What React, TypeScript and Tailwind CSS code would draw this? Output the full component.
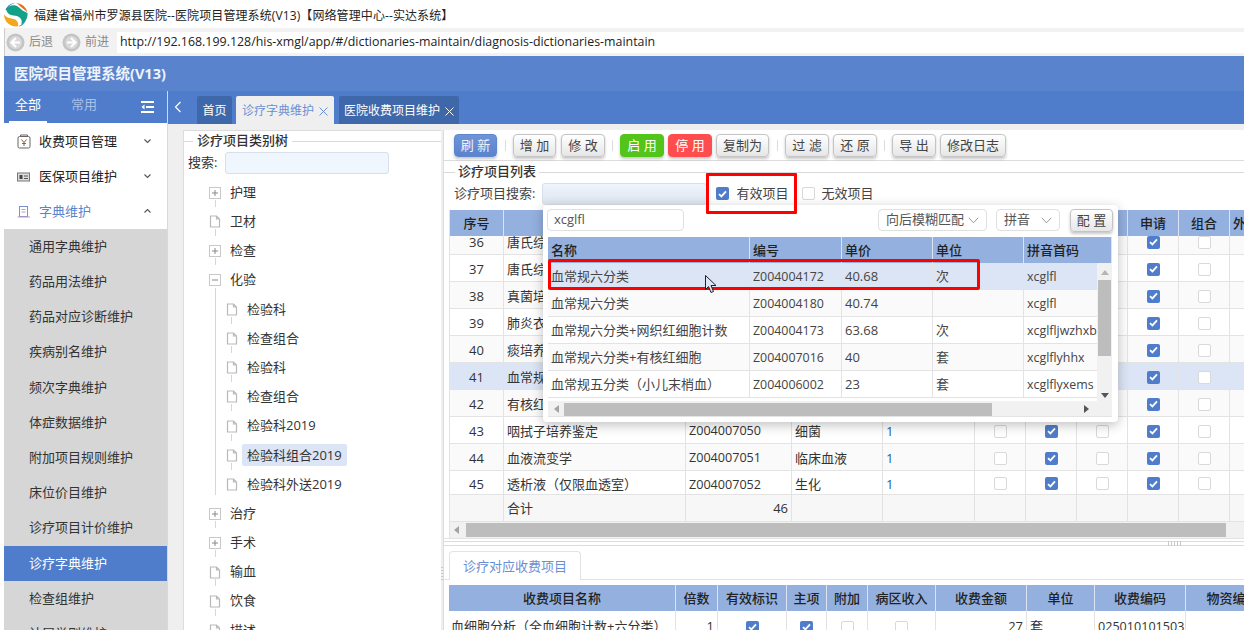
import React from "react";

const Check = ({ on = false }: { on?: boolean }) =>
  on ? (
    <span className="inline-flex w-[13px] h-[13px] rounded-[2px] bg-[#4f7dcb] items-center justify-center shrink-0">
      <svg width="9" height="8" viewBox="0 0 9 8" fill="none">
        <path d="M1 4.2 L3.4 6.4 L8 1.4" stroke="#fff" strokeWidth="1.8" />
      </svg>
    </span>
  ) : (
    <span className="inline-block w-[13px] h-[13px] rounded-[2px] bg-white border border-[#d9d9d9] shrink-0" />
  );

const Btn = ({ label, w, kind }: { label: string; w: string; kind?: "blue" | "green" | "red" }) => {
  const style =
    kind === "blue"
      ? "bg-gradient-to-b from-[#6f95d8] to-[#5a83cd] text-[#eef3fb] border-[#5f87cf]"
      : kind === "green"
      ? "bg-[#52c41a] text-white border-[#52c41a]"
      : kind === "red"
      ? "bg-[#ff4d4f] text-white border-[#ff4d4f]"
      : "bg-gradient-to-b from-white to-[#e6e6e6] text-[#444] border-[#c4c4c4]";
  return (
    <div
      className={`${w} h-[23px] pt-[2px] rounded-[4px] border flex items-center justify-center text-[13px] shadow-[0_2px_3px_rgba(0,0,0,0.22)] whitespace-pre ${style}`}
    >
      {label}
    </div>
  );
};

const Sep = ({ wide = false }: { wide?: boolean }) => (
  <div className={`w-px h-[11px] bg-[#dcdcdc] mr-[7px] ${wide ? "ml-[8px]" : "ml-[7px]"}`} />
);

const PlusBox = ({ minus = false }: { minus?: boolean }) => (
  <svg width="12" height="12" viewBox="0 0 12 12" fill="none" className="shrink-0">
    <rect x="0.5" y="0.5" width="11" height="11" fill="#fff" stroke="#c8c8c8" />
    <path d="M3 6 H9" stroke="#888" />
    {!minus && <path d="M6 3 V9" stroke="#888" />}
  </svg>
);

const FileIco = () => (
  <svg width="12" height="13" viewBox="0 0 12 13" fill="none" className="shrink-0">
    <path d="M1.5 1 H7.5 L10.5 4 V12 H1.5 Z M7.5 1 V4 H10.5" stroke="#b9b9b9" strokeWidth="1.2" fill="#fff" />
  </svg>
);

const TreeRow = ({
  label,
  type,
  child = false,
  active = false,
  guide = true,
}: {
  label: string;
  type: "plus" | "minus" | "file";
  child?: boolean;
  active?: boolean;
  guide?: boolean;
}) => (
  <div className={`relative h-[29.2px] flex items-center ${child ? "pl-[42px]" : "pl-[25px]"}`}>
    {guide && (
      <span className={`absolute ${child ? "left-[47px]" : "left-[31px]"} top-[22px] w-px h-[7px] bg-[#d6d6d6]`} />
    )}
    <span className="w-[12px] flex">
      {type === "plus" ? <PlusBox /> : type === "minus" ? <PlusBox minus /> : <FileIco />}
    </span>
    <span
      className={`ml-[4px] px-[5px] h-[22px] flex items-center rounded-[2px] text-[13px] text-[#333] ${
        active ? "bg-[#dce5f5]" : ""
      }`}
    >
      {label}
    </span>
  </div>
);

const mainCols = "grid-cols-[54px_182px_106px_91px_92px_51px_51px_51px_51px_51px_14px]";

const mainRows = [
  ["36", "唐氏综合征筛查", "", "", ""],
  ["37", "唐氏综合征筛查", "", "", ""],
  ["38", "真菌培养鉴定", "", "", ""],
  ["39", "肺炎衣原体检测", "", "", ""],
  ["40", "痰培养鉴定", "", "", ""],
  ["41", "血常规六分类", "", "", ""],
  ["42", "有核红细胞", "", "", ""],
  ["43", "咽拭子培养鉴定", "Z004007050", "细菌", "1"],
  ["44", "血液流变学", "Z004007051", "临床血液", "1"],
  ["45", "透析液（仅限血透室）", "Z004007052", "生化", "1"],
];

const Cell = ({
  children,
  cls = "",
  pt = "pt-[2px]",
}: {
  children?: React.ReactNode;
  cls?: string;
  pt?: string;
}) => (
  <div className={`border-r border-[#e3e3e3] flex items-center overflow-hidden whitespace-nowrap ${pt} ${cls}`}>{children}</div>
);

const popCols = "grid-cols-[202px_92px_91px_91px_88px]";
const popRows = [
  ["血常规六分类", "Z004004172", "40.68", "次", "xcglfl"],
  ["血常规六分类", "Z004004180", "40.74", "", "xcglfl"],
  ["血常规六分类+网织红细胞计数", "Z004004173", "63.68", "次", "xcglfljwzhxb"],
  ["血常规六分类+有核红细胞", "Z004007016", "40", "套", "xcglflyhhx"],
  ["血常规五分类（小儿末梢血）", "Z004006002", "23", "套", "xcglflyxems"],
];

const lowCols = "grid-cols-[227px_42px_69px_40px_41px_68px_91px_68px_91px_94px]";

const sideSub = [
  "通用字典维护",
  "药品用法维护",
  "药品对应诊断维护",
  "疾病别名维护",
  "频次字典维护",
  "体症数据维护",
  "附加项目规则维护",
  "床位价目维护",
  "诊疗项目计价维护",
  "诊疗字典维护",
  "检查组维护",
  "计层举则维护",
];

const Chevron = ({ up = false }: { up?: boolean }) => (
  <svg width="9" height="6" viewBox="0 0 9 6" fill="none" className="absolute left-[139px] top-[14px]">
    <path d={up ? "M1.5 4.5 L4.5 1.5 L7.5 4.5" : "M1.5 1.5 L4.5 4.5 L7.5 1.5"} stroke="#555" strokeWidth="1.1" />
  </svg>
);

const Close = () => (
  <svg width="9" height="9" viewBox="0 0 9 9" fill="none" className="ml-[5px] shrink-0">
    <path d="M0.5 0.5 L8.5 8.5 M8.5 0.5 L0.5 8.5" stroke="currentColor" strokeWidth="1" />
  </svg>
);

const NavCircle = ({ dir }: { dir: "l" | "r" }) => (
  <svg width="19" height="19" viewBox="0 0 19 19" className="shrink-0">
    <circle cx="9.5" cy="9.5" r="9" fill="#c4c4c4" />
    <circle cx="9.5" cy="9.5" r="6.5" fill="#d9d9d9" />
    <path
      d={dir === "l" ? "M10 5 L5.5 9.5 L10 14 M6 9.5 H14" : "M9 5 L13.5 9.5 L9 14 M13 9.5 H5"}
      stroke="#fff"
      strokeWidth="2"
      fill="none"
    />
  </svg>
);

const Sel = ({ label, w }: { label: string; w: string }) => (
  <div className={`${w} h-[22px] bg-white border border-[#e0e0e0] rounded-[4px] flex items-center justify-between px-[7px] text-[13px] text-[#555]`}>
    <span>{label}</span>
    <svg width="11" height="7" viewBox="0 0 11 7" fill="none">
      <path d="M0.8 0.8 L5.5 5.8 L10.2 0.8" stroke="#999" />
    </svg>
  </div>
);

export default function App() {
  return (
    <div className="relative w-[1244px] h-[630px] overflow-hidden bg-white font-['Open_Sans','Noto_Sans_CJK_SC',sans-serif] text-[#333]">
      {/* window title */}
      <div className="h-[28px] flex items-center pl-[3px] bg-white">
        <svg width="25" height="25" viewBox="0 0 25 25" className="shrink-0">
          <path d="M13 1 A 11.5 11.5 0 0 1 24.4 10.5 C 22 8 20 6.5 18 5 C 16.5 3.5 15 2 13 1 Z" fill="#e8701c" />
          <path d="M2.5 8 C 4 4 8 1 12 1 C 8 2 5 4.5 3.5 8 Z" fill="#1d6fae" />
          <path d="M3 7.5 C 6 2.5 12 2 15.5 5 C 18 7.5 21 9.5 24.5 11 C 25 16 22 21 18 23 C 20 19 18 15.5 14 14 C 9.5 13 5 14 3 7.5 Z" fill="#12a088" />
          <path d="M1 12 C 2 15.5 7 16 11 17 C 14 18 16 21 15 24.3 A 12 12 0 0 1 1 12 Z" fill="#f2a81d" />
          <path d="M16 24 C 19 23 21.5 21 23 18.5 C 22 21 20 23.5 16 24.5 Z" fill="#1d6fae" />
        </svg>
        <span className="ml-[6px] pt-[3px] text-[12px] tracking-[0.1px] text-[#222] whitespace-nowrap">福建省福州市罗源县医院--医院项目管理系统(V13)【网络管理中心--实达系统】</span>
      </div>

      {/* address bar */}
      <div className="h-[28px] flex items-center bg-[#f2f2f2] border-l-[4px] border-white shadow-[inset_1px_0_0_#ccc]">
        <div className="w-[113px] flex items-center pl-[2px] text-[12px] text-[#8a8a8a]">
          <NavCircle dir="l" />
          <span className="ml-[4px]">后退</span>
          <span className="w-[9px]" />
          <NavCircle dir="r" />
          <span className="ml-[4px]">前进</span>
        </div>
        <div className="flex-1 h-[21px] bg-white flex items-center pl-[3px] text-[12.4px] text-[#222]">
          http://192.168.199.128/his-xmgl/app/#/dictionaries-maintain/diagnosis-dictionaries-maintain
        </div>
      </div>

      {/* app header */}
      <div className="h-[35px] ml-[4px] bg-[#5a83cd] flex items-center pl-[10px] text-[14.5px] font-bold text-[#eef3fb]">
        医院项目管理系统(V13)
      </div>

      <div className="flex ml-[4px] h-[539px]">
        {/* sidebar */}
        <div className="w-[163px] shrink-0 bg-white overflow-hidden">
          <div className="relative h-[32px] mb-px bg-[#4f7dcb] flex items-center pb-[4px] text-[13px]">
            <span className="ml-[11px] text-white">全部</span>
            <span className="ml-[30px] text-[#a9c0e8]">常用</span>
            <svg width="13" height="12" viewBox="0 0 13 12" className="absolute left-[137px] top-[10px]">
              <path d="M0 1 H13 M5 6 H13 M0 11 H13" stroke="#fff" strokeWidth="2" />
              <path d="M3.5 3.5 L0.5 6 L3.5 8.5 Z" fill="#fff" />
            </svg>
            <span className="absolute left-[5px] bottom-0 w-[38px] h-[2px] bg-white" />
          </div>
          <div className="relative h-[35px] flex items-center text-[13px] text-[#222]">
            <svg width="14" height="15" viewBox="0 0 14 15" fill="none" className="ml-[13px]">
              <rect x="1" y="2.5" width="12" height="11.5" rx="1.5" stroke="#666" />
              <path d="M3.5 2.5 V1 H10.5 V2.5" stroke="#666" />
              <path d="M4.5 5.5 L7 8.5 L9.5 5.5 M7 8.5 V12 M5 9.5 H9" stroke="#8a6a2a" />
            </svg>
            <span className="ml-[8px]">收费项目管理</span>
            <Chevron />
          </div>
          <div className="relative h-[35px] flex items-center text-[13px] text-[#222]">
            <svg width="14" height="12" viewBox="0 0 14 12" fill="none" className="ml-[13px]">
              <rect x="0.5" y="2" width="12" height="8" fill="#ddd" stroke="#777" />
              <rect x="2.5" y="4" width="3" height="4" fill="#444" />
              <path d="M7 5 H11 M7 7.5 H11" stroke="#555" />
            </svg>
            <span className="ml-[8px]">医保项目维护</span>
            <Chevron />
          </div>
          <div className="relative h-[35px] flex items-center text-[13px] text-[#5a83cd]">
            <svg width="14" height="12" viewBox="0 0 14 12" fill="none" className="ml-[13px]">
              <rect x="2.5" y="0.5" width="8" height="10" stroke="#7d8fc8" />
              <path d="M4.5 3.5 H8.5 M4.5 6 H8.5 M0.5 11 H13" stroke="#c49ac8" />
            </svg>
            <span className="ml-[8px]">字典维护</span>
            <Chevron up />
          </div>
          <div className="bg-[#d6d6d6]">
            {sideSub.map((s) => (
              <div
                key={s}
                className={`h-[35.2px] flex items-center pl-[25px] text-[13px] ${
                  s === "诊疗字典维护" ? "bg-[#4f7dcb] text-white" : "text-[#333]"
                }`}
              >
                {s}
              </div>
            ))}
          </div>
        </div>

        {/* right area */}
        <div className="flex-1 min-w-0 flex flex-col border-l border-[#d9d9d9]">
          {/* tab strip */}
          <div className="h-[33px] bg-[#4f7dcb] flex items-end text-[12px] shrink-0">
            <svg width="8" height="12" viewBox="0 0 8 12" fill="none" className="ml-[6px] mb-[11px]">
              <path d="M6.5 1 L1.5 6 L6.5 11" stroke="#fff" strokeWidth="1.2" />
            </svg>
            <div className="ml-[15px] w-[35px] h-[28px] pt-[2px] rounded-t-[2px] bg-[#3f68ab] text-white flex items-center justify-center">首页</div>
            <div className="ml-[4px] w-[98px] h-[28px] pt-[2px] rounded-t-[2px] bg-[#efefef] text-[#6a8fd2] flex items-center justify-center">
              诊疗字典维护
              <Close />
            </div>
            <div className="ml-[5px] w-[120px] h-[28px] pt-[2px] rounded-t-[2px] bg-[#3f68ab] text-white flex items-center justify-center">
              医院收费项目维护
              <Close />
            </div>
          </div>

          <div className="flex-1 min-h-0 bg-[#efefef] pt-[6px] pl-[15px] flex">
            {/* tree panel */}
            <div className="w-[258px] shrink-0 bg-white border-l border-t border-[#dcdcdc] overflow-hidden">
              <div className="flex items-center h-[20px]">
                <span className="w-[9px] h-px bg-[#d9d9d9]" />
                <span className="px-[4px] text-[13px] font-medium text-[#333]">诊疗项目类别树</span>
                <span className="flex-1 h-px bg-[#d9d9d9]" />
              </div>
              <div className="flex items-center pl-[4px] h-[23px] text-[13px] text-[#333]">
                搜索:
                <span className="ml-[8px] w-[164px] h-[22px] rounded-[3px] bg-[#f0f6fd] border border-[#d6dfeb]" />
              </div>
              <div className="pt-[4px]">
                <TreeRow label="护理" type="plus" />
                <TreeRow label="卫材" type="file" />
                <TreeRow label="检查" type="plus" />
                <div className="relative">
                  <span className="absolute left-[31px] top-[22px] bottom-[4px] w-px bg-[#d6d6d6]" />
                  <TreeRow label="化验" type="minus" guide={false} />
                  <TreeRow label="检验科" type="file" child />
                  <TreeRow label="检查组合" type="file" child />
                  <TreeRow label="检验科" type="file" child />
                  <TreeRow label="检查组合" type="file" child />
                  <TreeRow label="检验科2019" type="file" child />
                  <TreeRow label="检验科组合2019" type="file" child active />
                  <TreeRow label="检验科外送2019" type="file" child guide={false} />
                </div>
                <TreeRow label="治疗" type="plus" />
                <TreeRow label="手术" type="plus" />
                <TreeRow label="输血" type="file" />
                <TreeRow label="饮食" type="file" />
                <TreeRow label="描述" type="file" />
              </div>
            </div>

            {/* vertical splitter */}
            <div className="w-[3px] shrink-0 bg-[#efefef] border-r border-[#dcdcdc] flex flex-col items-center">
              <span className="mt-[436px] w-[2px] h-[14px] bg-[repeating-linear-gradient(0deg,#c8c8c8_0,#c8c8c8_1px,transparent_1px,transparent_3px)]" />
            </div>

            {/* main panel */}
            <div className="flex-1 min-w-0 bg-white overflow-hidden">
              <div className="h-[31px] flex items-center pl-[10px] border-b border-[#dcdcdc]">
                <Btn label="刷 新" w="w-[43px]" kind="blue" />
                <Sep wide />
                <Btn label="增 加" w="w-[43px]" />
                <span className="w-[5px]" />
                <Btn label="修 改" w="w-[44px]" />
                <Sep />
                <Btn label="启 用" w="w-[44px]" kind="green" />
                <span className="w-[4px]" />
                <Btn label="停 用" w="w-[44px]" kind="red" />
                <span className="w-[4px]" />
                <Btn label="复制为" w="w-[53px]" />
                <Sep wide />
                <Btn label="过 滤" w="w-[44px]" />
                <span className="w-[4px]" />
                <Btn label="还 原" w="w-[44px]" />
                <Sep />
                <Btn label="导 出" w="w-[44px]" />
                <span className="w-[4px]" />
                <Btn label="修改日志" w="w-[66px]" />
              </div>
              <div className="flex items-center h-[20px] mt-[1px]">
                <span className="w-[11px] h-px bg-[#d9d9d9]" />
                <span className="px-[3px] text-[13px] font-medium text-[#333]">诊疗项目列表</span>
                <span className="flex-1 h-px bg-[#d9d9d9]" />
              </div>
              <div className="h-[23px] mb-[5px] flex items-center pl-[10px] text-[13px] text-[#444]">
                诊疗项目搜索:
                <span className="ml-[7px] w-[165px] h-[22px] rounded-[3px] bg-gradient-to-b from-[#eff5fd] to-[#dfe5ee] border border-[#d6dfeb]" />
                <span className="ml-[9px] flex"><Check on /></span>
                <span className="ml-[7px]">有效项目</span>
                <span className="ml-[14px] flex"><Check /></span>
                <span className="ml-[6px]">无效项目</span>
              </div>

              {/* main table */}
              <div className="ml-[5px] text-[13px] text-[#333] border-l border-[#e3e3e3]">
                <div className={`grid ${mainCols} h-[26px] bg-[#94b0df] font-medium text-[#222]`}>
                  {["序号", "", "", "", "", "", "", "", "申请", "组合", "外"].map((h, i) => (
                    <div
                      key={i}
                      className={`pt-[2px] flex items-center overflow-hidden whitespace-nowrap ${
                        i < 10 ? "justify-center border-r border-[#dbe3f2]" : "pl-[3px]"
                      }`}
                    >
                      {h}
                    </div>
                  ))}
                </div>
                <div className="h-[286px] overflow-hidden">
                  <div className="mt-[-8px]">
                    {mainRows.map((r, idx) => {
                      const pt = r[0] === "45" ? "pt-[5px]" : "pt-[3px]";
                      return (
                        <div
                          key={r[0]}
                          className={`grid ${mainCols} ${r[0] === "45" ? "h-[24px]" : "h-[27px]"} border-b border-[#e3e3e3] ${
                            r[0] === "41" ? "bg-[#dce5f5]" : idx % 2 === 0 ? "bg-[#fafafa]" : "bg-white"
                          }`}
                        >
                          <Cell pt={pt} cls="justify-center">{r[0]}</Cell>
                          <Cell pt={pt} cls="pl-[3px]">{r[1]}</Cell>
                          <Cell pt={pt} cls="pl-[3px] text-[12.6px]">{r[2]}</Cell>
                          <Cell pt={pt} cls="pl-[3px]">{r[3]}</Cell>
                          <Cell pt={pt} cls="pl-[3px] text-[#1565a8]">{r[4]}</Cell>
                          <Cell cls="justify-center"><Check /></Cell>
                          <Cell cls="justify-center"><Check on /></Cell>
                          <Cell cls="justify-center"><Check /></Cell>
                          <Cell cls="justify-center"><Check on /></Cell>
                          <Cell cls="justify-center"><Check /></Cell>
                          <div />
                        </div>
                      );
                    })}
                    <div className={`grid ${mainCols} h-[27px] bg-[#f7f7f7] border-b border-[#e3e3e3]`}>
                      <Cell />
                      <Cell cls="pl-[3px]">合计</Cell>
                      <Cell cls="justify-end pr-[3px]">46</Cell>
                      <Cell />
                      <Cell />
                      <Cell />
                      <Cell />
                      <Cell />
                      <Cell />
                      <Cell />
                      <div />
                    </div>
                  </div>
                </div>
                <div className="h-[16px] bg-[#f1f1f1] flex items-center">
                  <svg width="5" height="8" viewBox="0 0 5 8" className="ml-[4px]"><path d="M5 0 L0 4 L5 8 Z" fill="#a3a3a3" /></svg>
                  <div className="ml-[7px] w-[760px] h-[14px] bg-[#bdbdbd]" />
                </div>
              </div>

              {/* horizontal splitter */}
              <div className="relative h-[8px] border-t border-[#e3e3e3]">
                <div className="mt-[2px] h-[5px] border-y border-[#dcdcdc]" />
                <div className="absolute left-[724px] top-[2px] w-[13px] h-[5px] bg-[repeating-linear-gradient(90deg,#c8c8c8_0,#c8c8c8_1px,transparent_1px,transparent_3px)]" />
              </div>

              {/* lower tab */}
              <div className="mt-[5px] pl-[5px] h-[29px] border-b border-[#e3e3e3]">
                <div className="w-[132px] h-[29px] pt-[2px] bg-white border border-b-0 border-[#e3e3e3] rounded-t-[4px] flex items-center justify-center text-[13px] text-[#6a8fd2]">
                  诊疗对应收费项目
                </div>
              </div>

              {/* lower table */}
              <div className="ml-[5px] mt-[5px] text-[13px] text-[#333]">
                <div className={`grid ${lowCols} h-[26px] bg-[#94b0df] font-medium text-[#222]`}>
                  {["收费项目名称", "倍数", "有效标识", "主项", "附加", "病区收入", "收费金额", "单位", "收费编码", "物资编码"].map((h, i) => (
                    <div key={i} className="pt-[2px] flex items-center justify-center border-r border-[#dbe3f2] overflow-hidden whitespace-nowrap">
                      {h}
                    </div>
                  ))}
                </div>
                <div className={`grid ${lowCols} h-[30px]`}>
                  <Cell cls="pl-[2px]">血细胞分析（全血细胞计数+六分类）</Cell>
                  <Cell cls="justify-end pr-[3px]">1</Cell>
                  <Cell cls="justify-center"><Check on /></Cell>
                  <Cell cls="justify-center"><Check on /></Cell>
                  <Cell cls="justify-center"><Check /></Cell>
                  <Cell cls="justify-center"><Check /></Cell>
                  <Cell cls="justify-end pr-[3px]">27</Cell>
                  <Cell cls="pl-[3px]">套</Cell>
                  <Cell cls="pl-[3px] text-[12.6px]">025010101503</Cell>
                  <Cell />
                </div>
              </div>
            </div>
          </div>
        </div>
      </div>

      {/* search dropdown */}
      <div className="absolute left-[543px] top-[205px] w-[575px] h-[217px] bg-white rounded-[4px] shadow-[0_3px_12px_rgba(0,0,0,0.25)] pt-[4px] pl-[4px] text-[13px] text-[#444]">
        <div className="flex items-center h-[22px] pr-[5px]">
          <div className="w-[137px] h-[22px] border border-[#e0e0e0] rounded-[4px] flex items-center pl-[6px] text-[#555]">xcglfl</div>
          <div className="ml-auto flex items-center">
            <Sel label="向后模糊匹配" w="w-[109px]" />
            <span className="w-[9px]" />
            <Sel label="拼音" w="w-[64px]" />
            <span className="w-[10px]" />
            <Btn label="配 置" w="w-[43px]" />
          </div>
        </div>
        <div className="relative mt-[6px] ml-px w-[564px] h-[180px] border-b border-[#e3e3e3] bg-[#f1f1f1] overflow-hidden">
          <div className={`grid ${popCols} h-[26px] bg-[#94b0df] font-medium text-[#222]`}>
            {["名称", "编号", "单价", "单位", "拼音首码"].map((h) => (
              <div key={h} className="pt-[2px] flex items-center pl-[3px] border-r border-[#dbe3f2]">{h}</div>
            ))}
          </div>
          <div className="w-[549px] h-[138px] overflow-hidden bg-white">
            {popRows.map((r, i) => (
              <div
                key={i}
                className={`grid ${popCols} h-[27px] border-b border-[#e3e3e3] ${
                  i === 0 ? "bg-[#dce5f5]" : i % 2 === 1 ? "bg-[#fafafa]" : "bg-white"
                }`}
              >
                {r.map((c, j) => (
                  <Cell key={j} cls={`pl-[3px] ${j === 1 || j === 4 ? "text-[12.4px]" : ""}`}>{c}</Cell>
                ))}
              </div>
            ))}
          </div>
          <div className="absolute left-[549px] top-[26px] w-[15px] h-[138px] bg-[#f1f1f1] flex flex-col items-center">
            <svg width="8" height="5" viewBox="0 0 8 5" className="mt-[7px]"><path d="M0 5 L4 0 L8 5 Z" fill="#b5b5b5" /></svg>
            <div className="mt-[5px] w-[13px] h-[76px] bg-[#bdbdbd]" />
            <svg width="8" height="5" viewBox="0 0 8 5" className="mt-auto mb-[3px]"><path d="M0 0 L4 5 L8 0 Z" fill="#555" /></svg>
          </div>
          <div className="absolute left-0 top-[164px] w-[549px] h-[16px] flex items-center">
            <svg width="5" height="8" viewBox="0 0 5 8" className="ml-[6px]"><path d="M5 0 L0 4 L5 8 Z" fill="#a3a3a3" /></svg>
            <div className="ml-[5px] w-[428px] h-[13px] bg-[#bdbdbd]" />
            <svg width="5" height="8" viewBox="0 0 5 8" className="ml-auto mr-[8px]"><path d="M0 0 L5 4 L0 8 Z" fill="#555" /></svg>
          </div>
        </div>
      </div>

      {/* red annotations */}
      <div className="absolute left-[706px] top-[173px] w-[91px] h-[41px] border-[3px] border-[#f00] rounded-[1px]" />
      <div className="absolute left-[548px] top-[259px] w-[432px] h-[31px] border-[3px] border-[#f00] rounded-[2px]" />

      {/* mouse pointer */}
      <svg width="12" height="20" viewBox="0 0 12 20" className="absolute left-[705px] top-[275px]">
        <path d="M0.5 0.5 V14.5 L3.5 11.5 L6 17.5 L8.5 16.5 L6 10.5 H11 Z" fill="#dce5f5" stroke="#222" />
      </svg>
    </div>
  );
}
